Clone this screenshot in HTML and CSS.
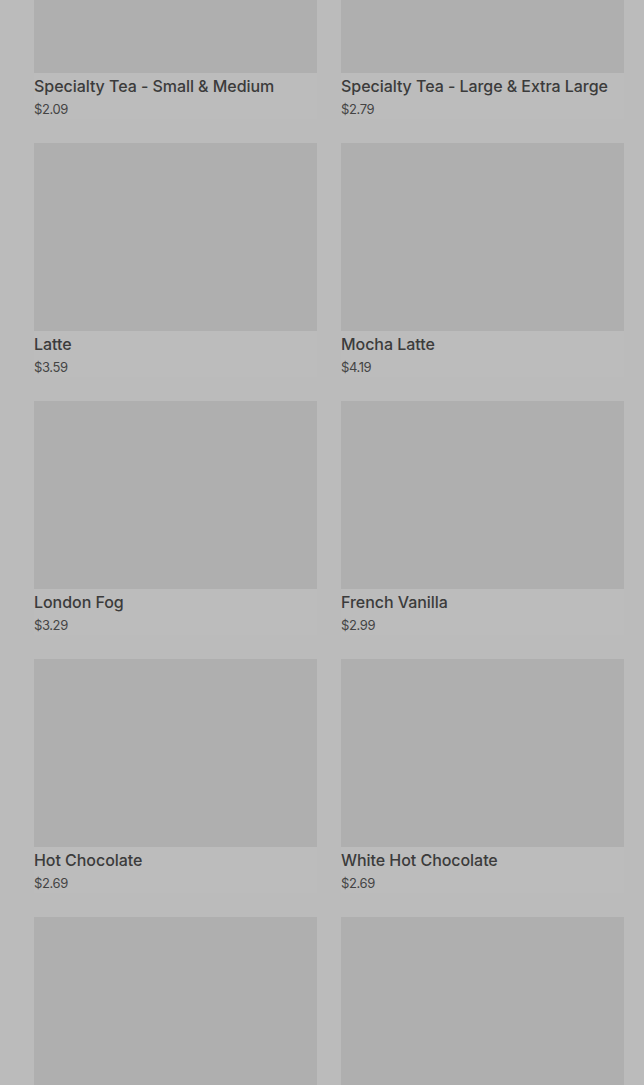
FILE: index.html
```html
<!DOCTYPE html>
<html lang="en">
<head>
<meta charset="utf-8">
<link rel="stylesheet" href="styles.css">
</head>
<body>
<main class="grid">
  <div class="card"><div class="thumb"></div><div class="title">Specialty Tea - Small &amp; Medium</div><div class="price">$2.09</div></div>
  <div class="card"><div class="thumb"></div><div class="title">Specialty Tea - Large &amp; Extra Large</div><div class="price">$2.79</div></div>
  <div class="card"><div class="thumb"></div><div class="title">Latte</div><div class="price">$3.59</div></div>
  <div class="card"><div class="thumb"></div><div class="title">Mocha Latte</div><div class="price">$4.19</div></div>
  <div class="card"><div class="thumb"></div><div class="title">London Fog</div><div class="price">$3.29</div></div>
  <div class="card"><div class="thumb"></div><div class="title">French Vanilla</div><div class="price">$2.99</div></div>
  <div class="card"><div class="thumb"></div><div class="title">Hot Chocolate</div><div class="price">$2.69</div></div>
  <div class="card"><div class="thumb"></div><div class="title">White Hot Chocolate</div><div class="price">$2.69</div></div>
  <div class="card"><div class="thumb"></div><div class="title">&nbsp;</div><div class="price">&nbsp;</div></div>
  <div class="card"><div class="thumb"></div><div class="title">&nbsp;</div><div class="price">&nbsp;</div></div>
</main>
</body>
</html>
```
FILE: styles.css
```css
html, body {
  margin: 0;
  padding: 0;
  background: #bbbbbb;
  overflow: hidden;
  height: 1085px;
}
body {
  font-family: Inter, "Noto Sans", sans-serif;
  color: #3b3b3b;
}
.grid {
  display: grid;
  grid-template-columns: 283px 283px;
  column-gap: 24px;
  row-gap: 24px;
  padding: 0 20px 0 34px;
  margin-top: -115px;
}
.card {
  display: flex;
  flex-direction: column;
  background: #bcbcbc;
}
.thumb {
  height: 188px;
  background: #afafaf;
}
.title {
  margin-top: 2px;
  font-size: 16px;
  line-height: 22px;
  font-weight: 500;
  letter-spacing: -0.05px;
}
.price {
  margin-top: 2px;
  font-size: 13px;
  line-height: 20px;
  letter-spacing: -0.4px;
  color: #444444;
}
```
